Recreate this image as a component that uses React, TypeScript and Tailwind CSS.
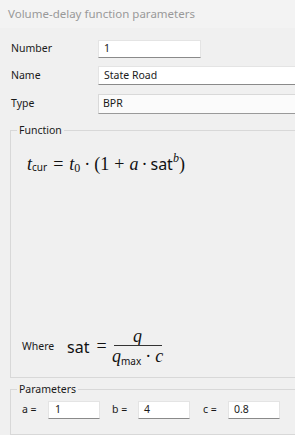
import React from "react";

const ui = { fontFamily: '"Noto Sans", "Open Sans", sans-serif' };
const serif = { fontFamily: '"Liberation Serif", "DejaVu Serif", serif' };
const sans = { fontFamily: '"Noto Sans", "Liberation Sans", sans-serif' };

function Field({ value, className = "" }: { value: string; className?: string }) {
  return (
    <div
      className={`flex items-center bg-white border border-[#e4e4e4] border-b-[#8a8a8a] pl-[5px] text-[10.5px] text-[#1a1a1a] ${className}`}
    >
      {value}
    </div>
  );
}

function I({ children }: { children: React.ReactNode }) {
  return (
    <span className="italic" style={serif}>
      {children}
    </span>
  );
}

export default function App() {
  return (
    <div className="w-[295px] h-[435px] bg-[#f0f0f0] overflow-hidden flex flex-col" style={ui}>
      <div className="h-[28px] shrink-0 bg-[#f3f3f3] flex items-center pl-[8px] text-[11.5px] text-[#999999]">
        Volume-delay function parameters
      </div>

      <div className="flex flex-col pl-[11px] pt-[12px] text-[10.5px]">
        <div className="flex items-center h-[18px]">
          <span className="w-[87px] text-[#1a1a1a]">Number</span>
          <Field value="1" className="w-[103px] h-[18px]" />
        </div>
        <div className="flex items-center h-[19px] mt-[8px]">
          <span className="w-[87px] text-[#1a1a1a]">Name</span>
          <Field value="State Road" className="flex-1 h-[19px] border-r-0" />
        </div>
        <div className="flex items-center h-[20px] mt-[9px]">
          <span className="w-[87px] text-[#1a1a1a]">Type</span>
          <div className="flex-1 h-[20px] flex items-center bg-[#fbfbfb] border border-[#d9d9d9] border-b-[#9a9a9a] border-r-0 pl-[4px] text-[#1a1a1a]">
            BPR
          </div>
        </div>
      </div>

      <fieldset className="ml-[10px] mr-[-20px] mt-[8px] border border-[#d8d8d8]">
        <legend className="ml-[6px] px-[2px] text-[10.5px] leading-[16px] text-[#1a1a1a]">Function</legend>
        <div className="h-[239px] flex flex-col">
          <div className="ml-[16px] mt-[8px] w-[170px] h-[36px] flex items-center text-[18px] text-[#111]" style={serif}>
            <I>t</I>
            <span className="text-[10px] self-end mb-[7px]" style={sans}>cur</span>
            <span className="mx-[6px]">=</span>
            <I>t</I>
            <span className="text-[12px] self-end mb-[5px]">0</span>
            <span className="mx-[4px]">·</span>
            <span>(</span>
            <span>1</span>
            <span className="mx-[5px]">+</span>
            <I>a</I>
            <span className="mx-[3px]">·</span>
            <span className="text-[16px]" style={sans}>sat</span>
            <span className="text-[12px] italic self-start mt-[3px]">b</span>
            <span>)</span>
          </div>
          <div className="flex-1" />
          <div className="flex items-center mb-[9px]">
            <span className="ml-[11px] w-[45px] text-[10.5px] text-[#1a1a1a]">Where</span>
            <div className="h-[43px] w-[113px] flex items-center text-[18px] text-[#111]">
              <span className="text-[16px]" style={sans}>sat</span>
              <span className="mx-[7px]" style={serif}>=</span>
              <div className="flex flex-col items-center w-[48px]">
                <span className="leading-[18px]"><I>q</I></span>
                <div className="w-full h-[1px] bg-[#333]" />
                <span className="leading-[20px] flex items-baseline" style={serif}>
                  <I>q</I>
                  <span className="text-[10px] translate-y-[3px]" style={sans}>max</span>
                  <span className="mx-[4px]">·</span>
                  <I>c</I>
                </span>
              </div>
            </div>
          </div>
        </div>
      </fieldset>

      <fieldset className="ml-[10px] mr-[-20px] mt-[3px] h-[80px] border border-[#d8d8d8]">
        <legend className="ml-[6px] px-[2px] text-[10.5px] leading-[16px] text-[#1a1a1a]">Parameters</legend>
        <div className="flex items-center mt-[4px] text-[10.5px] text-[#1a1a1a]">
          <span className="ml-[11px] w-[26px]">a =</span>
          <Field value="1" className="w-[52px] h-[18px] pl-[6px]" />
          <span className="ml-[12px] w-[26px]">b =</span>
          <Field value="4" className="w-[52px] h-[18px] pl-[4px]" />
          <span className="ml-[13px] w-[25px]">c =</span>
          <Field value="0.8" className="w-[52px] h-[18px]" />
        </div>
      </fieldset>
    </div>
  );
}
